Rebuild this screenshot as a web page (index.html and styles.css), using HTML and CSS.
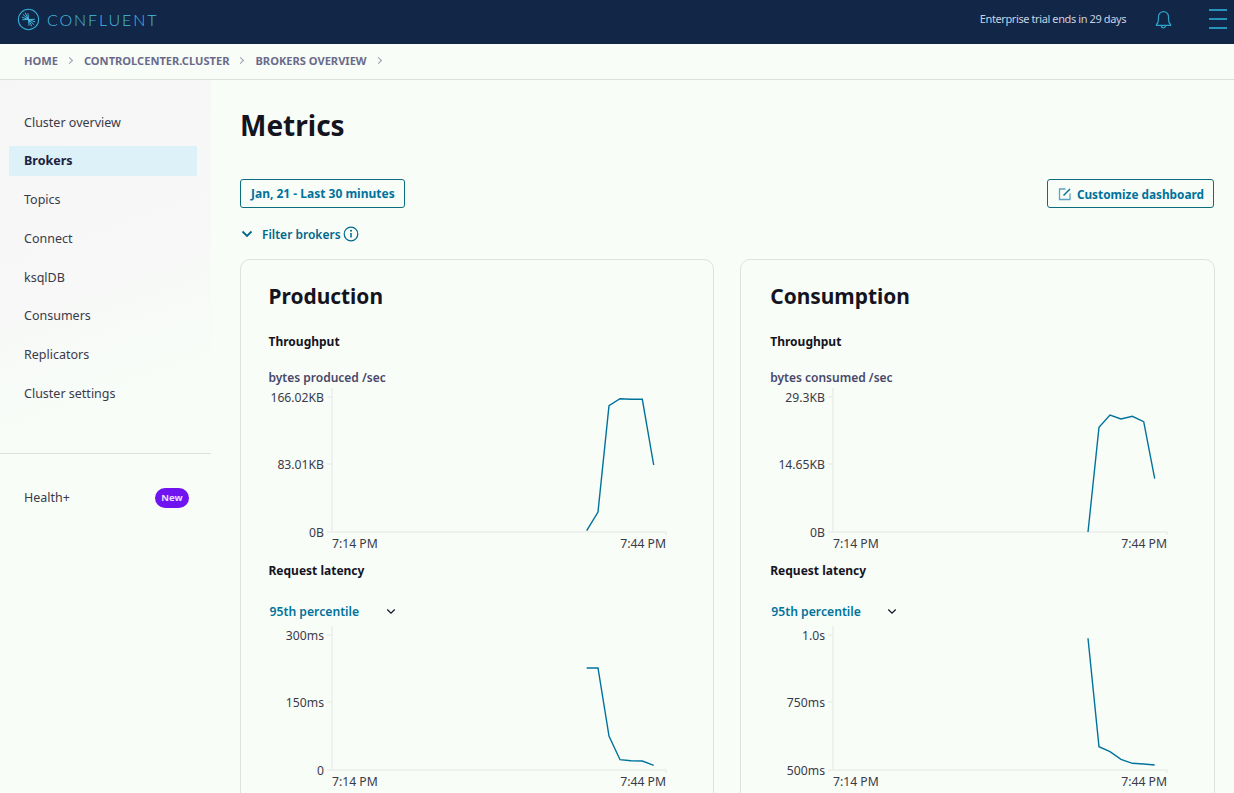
FILE: index.html
```html
<!DOCTYPE html>
<html lang="en">
<head>
  <meta charset="UTF-8">
  <title>Brokers overview</title>
  <link rel="stylesheet" href="styles.css">
</head>
<body>
  <header class="topbar">
    <div class="brand">
      <svg class="brand-icon" viewBox="0 0 24 24">
        <circle cx="12" cy="12" r="10.6" fill="none" stroke="#36acd2" stroke-width="1.1"/>
        <path d="M12 12L6 6.5M12 12L8.5 4.8M12 12L5 9.5M12 12L5.5 12.2M12 12L18 17.5M12 12L15.5 19.2M12 12L19 14.5M12 12L18.5 11.8M12 12L12.6 18.5M12 12L11.4 5.5" stroke="#45bde2" stroke-width="1" fill="none"/>
      </svg>
      <span class="brand-name">CONFLUENT</span>
    </div>
    <div class="topbar-right">
      <span class="trial">Enterprise trial ends in 29 days</span>
      <svg class="bell" viewBox="0 0 20 22">
        <path d="M2.5 16.5c1.6-1.6 2.2-3 2.2-5.5V8a5.3 5.3 0 0 1 10.6 0v3c0 2.5.6 3.9 2.2 5.5v.8H2.5z" fill="none" stroke="#2ea3c9" stroke-width="1.3" stroke-linejoin="round"/>
        <path d="M7.8 17.5a2.2 2.2 0 0 0 4.4 0" fill="none" stroke="#2ea3c9" stroke-width="1.3"/>
      </svg>
      <div class="burger"><span></span><span></span><span></span></div>
    </div>
  </header>

  <nav class="crumbs">
    <span>Home</span><i class="crumb-sep"></i>
    <span>controlcenter.cluster</span><i class="crumb-sep"></i>
    <span>Brokers overview</span><i class="crumb-sep"></i>
  </nav>

  <div class="layout">
    <aside class="sidebar">
      <ul class="side-nav">
        <li>Cluster overview</li>
        <li class="active">Brokers</li>
        <li>Topics</li>
        <li>Connect</li>
        <li>ksqlDB</li>
        <li>Consumers</li>
        <li>Replicators</li>
        <li>Cluster settings</li>
      </ul>
      <div class="side-extra">
        <span>Health+</span>
        <span class="badge-new">New</span>
      </div>
    </aside>

    <main class="content">
      <h1>Metrics</h1>
      <div class="toolbar">
        <button class="btn-outline">Jan, 21 - Last 30 minutes</button>
        <button class="btn-outline btn-customize">
          <svg class="edit-icon" viewBox="0 0 14 14">
            <path d="M7.5 2H1.5v10.5H12V6.5" fill="none" stroke="#5aa3c4" stroke-width="1.3"/>
            <path d="M5.5 8.5L12 2" fill="none" stroke="#00729c" stroke-width="1.4"/>
          </svg>
          Customize dashboard
        </button>
      </div>
      <div class="filter">
        <svg class="chev" viewBox="0 0 12 8"><path d="M1.5 1.5L6 6l4.5-4.5" fill="none" stroke="#00668c" stroke-width="1.8"/></svg>
        <span>Filter brokers</span>
        <svg class="info" viewBox="0 0 16 16">
          <circle cx="8" cy="8" r="6.8" fill="none" stroke="#00668c" stroke-width="1.2"/>
          <path d="M8 7v4.5" stroke="#00668c" stroke-width="1.5"/>
          <circle cx="8" cy="4.8" r="1" fill="#00668c"/>
        </svg>
      </div>

      <div class="cards">
        <section class="card">
          <h2>Production</h2>
          <h3>Throughput</h3>
          <p class="unit">bytes produced /sec</p>
          <svg class="chart" viewBox="0 0 416 170">
            <path class="axis" d="M58 11h5M58 78h5M58 146h339v3M63 2v144"/>
            <text class="tick" x="55" y="15.5">166.02KB</text>
            <text class="tick" x="55" y="82.5">83.01KB</text>
            <text class="tick" x="55" y="150.5">0B</text>
            <text class="tick start" x="63" y="162">7:14 PM</text>
            <text class="tick" x="397" y="162">7:44 PM</text>
            <polyline class="line" points="317.7,144.7 329,126 340,19.7 351,12.7 362,13.3 373.3,13.3 384.7,79"/>
          </svg>
          <h3 class="latency">Request latency</h3>
          <div class="select"><span>95th percentile</span><svg class="chev-small" viewBox="0 0 12 8"><path d="M1.5 1.5L6 6l4.5-4.5" fill="none" stroke="#1a1a2e" stroke-width="1.6"/></svg></div>
          <svg class="chart" viewBox="0 0 416 170">
            <path class="axis" d="M58 11h5M58 78h5M58 146h339v3M63 2v144"/>
            <text class="tick" x="55" y="15.5">300ms</text>
            <text class="tick" x="55" y="82.5">150ms</text>
            <text class="tick" x="55" y="150.5">0</text>
            <text class="tick start" x="63" y="162">7:14 PM</text>
            <text class="tick" x="397" y="162">7:44 PM</text>
            <polyline class="line" points="317.7,44 329,44 340,112 351,135.7 362,136.7 373.3,137 384.7,141.3"/>
          </svg>
        </section>

        <section class="card">
          <h2>Consumption</h2>
          <h3>Throughput</h3>
          <p class="unit">bytes consumed /sec</p>
          <svg class="chart" viewBox="0 0 416 170">
            <path class="axis" d="M58 11h5M58 78h5M58 146h339v3M63 2v144"/>
            <text class="tick" x="55" y="15.5">29.3KB</text>
            <text class="tick" x="55" y="82.5">14.65KB</text>
            <text class="tick" x="55" y="150.5">0B</text>
            <text class="tick start" x="63" y="162">7:14 PM</text>
            <text class="tick" x="397" y="162">7:44 PM</text>
            <polyline class="line" points="318,146 329,41.3 340,29 351,33 362.3,30.3 373.7,35.7 384.7,92.7"/>
          </svg>
          <h3 class="latency">Request latency</h3>
          <div class="select"><span>95th percentile</span><svg class="chev-small" viewBox="0 0 12 8"><path d="M1.5 1.5L6 6l4.5-4.5" fill="none" stroke="#1a1a2e" stroke-width="1.6"/></svg></div>
          <svg class="chart" viewBox="0 0 416 170">
            <path class="axis" d="M58 11h5M58 78h5M58 146h339v3M63 2v144"/>
            <text class="tick" x="55" y="15.5">1.0s</text>
            <text class="tick" x="55" y="82.5">750ms</text>
            <text class="tick" x="55" y="150.5">500ms</text>
            <text class="tick start" x="63" y="162">7:14 PM</text>
            <text class="tick" x="397" y="162">7:44 PM</text>
            <polyline class="line" points="318,14.3 329,122.7 340,127.7 351,135.3 362.3,139.3 373.7,140 384.7,141"/>
          </svg>
        </section>
      </div>
    </main>
  </div>
</body>
</html>
```

FILE: styles.css
```css
html, body {
  height: 100%;
  margin: 0;
  padding: 0;
  overflow: hidden;
}
body {
  background: #f8fdf8;
  font-family: "Noto Sans", "Open Sans", sans-serif;
  font-size: 13px;
  color: #2c2c3e;
}

/* top bar */
.topbar {
  height: 44px;
  background: #122647;
  display: flex;
  align-items: center;
  justify-content: space-between;
  padding: 0 7px 6px 17px;
  box-sizing: border-box;
}
.brand {
  display: flex;
  align-items: center;
  gap: 7px;
}
.brand-icon {
  width: 23px;
  height: 23px;
}
.brand-name {
  font-family: "Lato", sans-serif;
  font-weight: 300;
  font-size: 16px;
  letter-spacing: 1.9px;
  color: #45bde2;
}
.topbar-right {
  display: flex;
  align-items: center;
}
.trial {
  font-size: 11px;
  letter-spacing: -0.4px;
  color: #c8d2e0;
  margin: 0 28px 2px 0;
}
.bell {
  width: 19px;
  height: 21px;
  margin: 0 36px 0 0;
}
.burger {
  display: flex;
  flex-direction: column;
  gap: 7px;
  width: 18px;
}
.burger span {
  height: 2px;
  background: #2793b8;
}

/* breadcrumb */
.crumbs {
  height: 36px;
  box-sizing: border-box;
  border-bottom: 1px solid #dde0de;
  display: flex;
  align-items: center;
  padding: 0 0 2px 24px;
  font-size: 11.1px;
  font-weight: 700;
  text-transform: uppercase;
  color: #6a6a8a;
}
.crumb-sep {
  width: 4px;
  height: 4px;
  border-top: 1px solid #9c9cac;
  border-right: 1px solid #9c9cac;
  transform: rotate(45deg);
  margin: 0 12px 0 9px;
}

.layout {
  display: flex;
  width: 100%;
}

/* sidebar */
.sidebar {
  width: 211px;
  flex: none;
  height: 720px;
  background: linear-gradient(160deg, #f6f6f6 0%, #f7f8f7 30%, #f8fdf8 45%);
}
.side-nav {
  list-style: none;
  margin: 0;
  padding: 27px 14px 45px 9px;
  display: flex;
  flex-direction: column;
  gap: 8.7px;
  border-bottom: 1px solid #dde0de;
  font-size: 12.5px;
}
.side-nav li {
  height: 30px;
  line-height: 32px;
  padding-left: 15px;
  color: #3a3a48;
}
.side-nav li.active {
  background: #dcf1f8;
  line-height: 29px;
  font-weight: 700;
  color: #1c2340;
}
.side-extra {
  display: flex;
  align-items: center;
  justify-content: space-between;
  padding: 34px 22px 0 24px;
  font-size: 12.5px;
  color: #3a3a48;
}
.badge-new {
  background: #6f14f1;
  color: #e8defc;
  font-size: 9.5px;
  font-weight: 700;
  width: 34px;
  height: 20px;
  line-height: 20px;
  text-align: center;
  border-radius: 10px;
}

/* main area */
.content {
  flex: 1;
  min-width: 0;
  padding: 0 19px 0 29px;
}
h1 {
  margin: 25px 0 0;
  font-size: 28px;
  line-height: 40px;
  font-weight: 700;
  color: #14141f;
}
.toolbar {
  display: flex;
  justify-content: space-between;
  margin: 34px 1px 0 0;
}
.btn-outline {
  display: flex;
  align-items: center;
  gap: 5px;
  height: 29px;
  padding: 0 9px 0 10px;
  background: transparent;
  border: 1px solid #0b6e7e;
  border-radius: 3px;
  font-family: inherit;
  font-size: 12px;
  font-weight: 700;
  color: #00729c;
}
.btn-customize {
  padding-left: 9px;
  font-size: 11.8px;
}
.edit-icon {
  width: 14px;
  height: 14px;
  margin-left: 1px;
}
.filter {
  display: flex;
  align-items: center;
  margin-top: 16px;
  height: 20px;
  font-size: 12px;
  font-weight: 600;
  color: #00668c;
}
.chev {
  width: 12px;
  height: 8px;
  margin: 0 9px 0 1px;
}
.info {
  width: 16px;
  height: 16px;
  margin-left: 2px;
}
.cards {
  display: grid;
  grid-template-columns: minmax(0, 1fr) minmax(0, 1fr);
  gap: 26px;
  margin: 15px 0 0 -0.5px;
}
.card {
  border: 1px solid #dfe2e0;
  border-radius: 10px;
  padding: 0 28px 0 29px;
  height: 620px;
}
.card:first-child {
  padding-left: 28px;
}
h2 {
  margin: 21px 0 0;
  font-size: 20.9px;
  line-height: 30px;
  font-weight: 700;
  color: #14141f;
}
h3 {
  margin: 22px 0 0;
  font-size: 12px;
  line-height: 18px;
  font-weight: 700;
  color: #14141f;
}
.unit {
  margin: 18px 0 -1px;
  font-size: 12px;
  line-height: 18px;
  font-weight: 600;
  color: #48486a;
}
.chart {
  display: block;
  width: 416px;
  height: 170px;
  overflow: visible;
}
.latency {
  margin-top: 6px;
}
.select {
  display: flex;
  align-items: center;
  height: 20px;
  margin: 21px 0 0 1px;
  font-size: 12.2px;
  font-weight: 600;
  color: #00729c;
}
.select span {
  width: 116px;
}
.chev-small {
  width: 10px;
  height: 7px;
}
.select + .chart {
  margin-top: 3px;
}
.axis {
  fill: none;
  stroke: #ecedec;
  stroke-width: 1.5;
}
.tick {
  font-size: 12.2px;
  fill: #3a3a48;
  text-anchor: end;
}
.tick.start {
  text-anchor: start;
}
.line {
  fill: none;
  stroke: #00729c;
  stroke-width: 1.4;
}
```
